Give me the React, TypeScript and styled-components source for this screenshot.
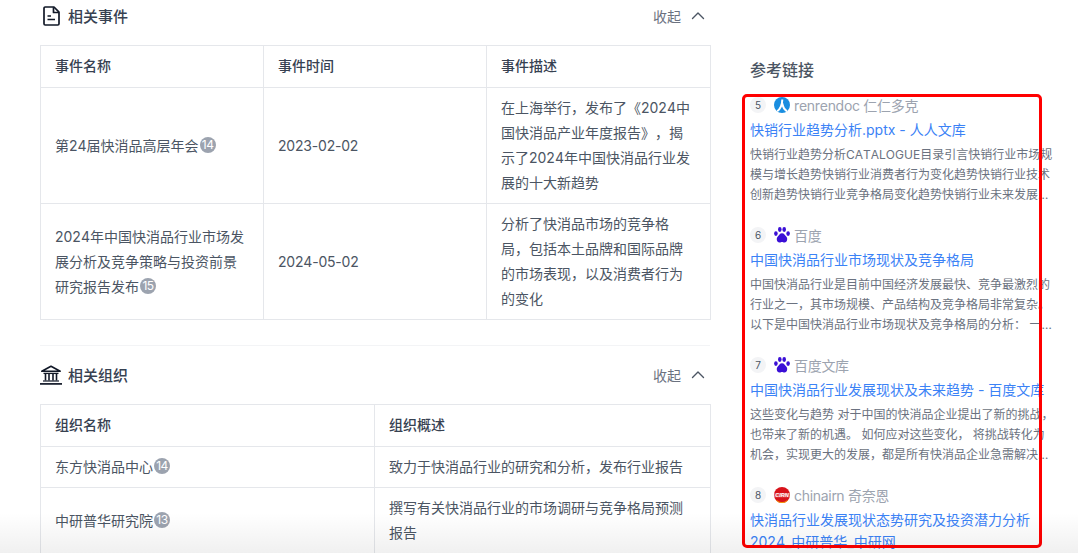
import styled, { createGlobalStyle } from 'styled-components';

const GlobalStyle = createGlobalStyle`
  html, body {
    margin: 0;
    padding: 0;
    height: 100%;
    background: #fff;
    overflow: hidden;
    font-family: Inter, "Noto Sans CJK SC", "Noto Sans", sans-serif;
    text-spacing-trim: space-all;
    font-kerning: none;
  }
  * { box-sizing: border-box; }
`;

const events = [
  { name: '第24届快消品高层年会', ref: 14, time: '2023-02-02', desc: '在上海举行，发布了《2024中国快消品产业年度报告》，揭示了2024年中国快消品行业发展的十大新趋势' },
  { name: '2024年中国快消品行业市场发展分析及竞争策略与投资前景研究报告发布', ref: 15, time: '2024-05-02', desc: '分析了快消品市场的竞争格局，包括本土品牌和国际品牌的市场表现，以及消费者行为的变化' },
];

const orgs = [
  { name: '东方快消品中心', ref: 14, desc: '致力于快消品行业的研究和分析，发布行业报告' },
  { name: '中研普华研究院', ref: 13, desc: '撰写有关快消品行业的市场调研与竞争格局预测报告' },
];

const links = [
  { n: 5, logo: 'renren', source: 'renrendoc 仁仁多克', title: '快销行业趋势分析.pptx - 人人文库', desc: '快销行业趋势分析CATALOGUE目录引言快销行业市场规模与增长趋势快销行业消费者行为变化趋势快销行业技术创新趋势快销行业竞争格局变化趋势快销行业未来发展趋势预测与建议总结与展望' },
  { n: 6, logo: 'baidu', source: '百度', title: '中国快消品行业市场现状及竞争格局', desc: '中国快消品行业是目前中国经济发展最快、竞争最激烈的行业之一，其市场规模、产品结构及竞争格局非常复杂。以下是中国快消品行业市场现状及竞争格局的分析： 一、市场规模持续扩大，产品结构不断优化' },
  { n: 7, logo: 'baidu', source: '百度文库', title: '中国快消品行业发展现状及未来趋势 - 百度文库', desc: '这些变化与趋势 对于中国的快消品企业提出了新的挑战， 也带来了新的机遇。 如何应对这些变化， 将挑战转化为机会，实现更大的发展，都是所有快消品企业急需解决的问题，也是本文要探讨的内容' },
  { n: 8, logo: 'cirn', source: 'chinairn 奇奈恩', title: '快消品行业发展现状态势研究及投资潜力分析2024_中研普华_中研网', desc: '' },
];

const DocIcon = () => (
  <svg width="17" height="20" viewBox="0 0 17 20" fill="none" stroke="#111827" strokeWidth="1.7" strokeLinejoin="round">
    <path d="M2.200 1h8.800l5 5.200v11.600a1.200 1.200 0 0 1-1.200 1.200H2.200A1.200 1.200 0 0 1 1 17.800V2.200A1.200 1.200 0 0 1 2.200 1z" />
    <path d="M10.500 1.200v5.300h5.300" />
    <path d="M4.500 10h3.500M4.500 13.500h7.500" strokeWidth="1.300" />
  </svg>
);

const BankIcon = () => (
  <svg width="22" height="20" viewBox="0 0 22 20" fill="none" stroke="#111827">
    <path d="M11 1.200 1.800 6.300h18.400z" strokeWidth="1.600" strokeLinejoin="round" />
    <path d="M3.500 8.400h15" strokeWidth="1.300" />
    <path d="M5.500 9v6.500M9 9v6.500M13 9v6.500M16.500 9v6.500" strokeWidth="1.600" />
    <path d="M3 16h16" strokeWidth="1.200" />
    <path d="M0 18.900h22" strokeWidth="1.700" />
  </svg>
);

const Chevron = () => (
  <svg width="14" height="14" viewBox="0 0 14 14" fill="none" stroke="#4b5563" strokeWidth="1.400" strokeLinecap="round" strokeLinejoin="round">
    <path d="M1.500 9.500 7 4l5.500 5.500" />
  </svg>
);

const RenrenLogo = () => (
  <svg width="16" height="16" viewBox="0 0 16 16">
    <circle cx="8" cy="8" r="8" fill="#1a8ee0" />
    <path d="M8.300 2.500C8.200 8 6.800 11.500 3.200 14.300M8.300 6.500c.5 3.500 2 6 4.700 7.800" fill="none" stroke="#fff" strokeWidth="2" />
  </svg>
);

const BaiduLogo = () => (
  <svg width="16" height="16" viewBox="0 0 16 16">
    <g fill="#3a0fd6">
      <ellipse cx="1.900" cy="6.600" rx="1.800" ry="2.300" />
      <ellipse cx="5.800" cy="2.500" rx="1.800" ry="2.400" />
      <ellipse cx="10.200" cy="2.500" rx="1.800" ry="2.400" />
      <ellipse cx="14.100" cy="6.600" rx="1.800" ry="2.300" />
      <path d="M8 6.200c2.300 0 2.900 2.100 4.200 3.300 1.700 1.500 1.300 5.800-1.700 6.100-1.100.1-1.600-.5-2.500-.5s-1.400.6-2.500.5c-3-.3-3.400-4.600-1.700-6.100C5.100 8.300 5.700 6.200 8 6.200z" />
    </g>
  </svg>
);

const CirnLogo = () => (
  <svg width="16" height="16" viewBox="0 0 16 16">
    <circle cx="8" cy="8" r="8" fill="#d8131b" />
    <path d="M2.500 13.500a8 8 0 0 0 11 0" fill="none" stroke="#f59e0b" strokeWidth="1" />
    <path d="M0 6.200h16v4.200H0z" fill="#fff" opacity="0.25" />
    <text x="8" y="10" textAnchor="middle" fontSize="5.500" fontWeight="700" fontStyle="italic" fill="#fff" fontFamily="Liberation Sans, sans-serif">CIRN</text>
  </svg>
);

const Logo = ({ kind }: { kind: string }) => {
  if (kind === 'renren') return <RenrenLogo />;
  if (kind === 'baidu') return <BaiduLogo />;
  return <CirnLogo />;
};

const App = () => {
  return (
    <Page>
      <GlobalStyle />
      <Main>
        <SectionHead>
          <HeadTitle>
            <DocIconBox>
              <DocIcon />
            </DocIconBox>
            相关事件
          </HeadTitle>
          <Collapse>
            收起
            <Chevron />
          </Collapse>
        </SectionHead>
        <Table>
          <colgroup>
            <col width="223" />
            <col width="223" />
            <col width="224" />
          </colgroup>
          <thead>
            <tr>
              <Th>事件名称</Th>
              <Th>事件时间</Th>
              <Th>事件描述</Th>
            </tr>
          </thead>
          <tbody>
            {events.map((e) => (
              <tr key={e.time}>
                <Td>
                  {e.name}
                  <RefBadge>{e.ref}</RefBadge>
                </Td>
                <DateTd>{e.time}</DateTd>
                <Td>{e.desc}</Td>
              </tr>
            ))}
          </tbody>
        </Table>
        <Divider />
        <SectionHead>
          <HeadTitle>
            <BankIcon />
            相关组织
          </HeadTitle>
          <Collapse>
            收起
            <Chevron />
          </Collapse>
        </SectionHead>
        <Table>
          <colgroup>
            <col width="334" />
            <col width="336" />
          </colgroup>
          <thead>
            <tr>
              <Th>组织名称</Th>
              <Th>组织概述</Th>
            </tr>
          </thead>
          <tbody>
            {orgs.map((o) => (
              <tr key={o.name}>
                <Td>
                  {o.name}
                  <RefBadge>{o.ref}</RefBadge>
                </Td>
                <Td>{o.desc}</Td>
              </tr>
            ))}
          </tbody>
        </Table>
      </Main>
      <Side>
        <SideTitle>参考链接</SideTitle>
        <LinkList>
          {links.map((l) => (
            <LinkItem key={l.n}>
              <SourceRow>
                <NumBadge>{l.n}</NumBadge>
                <Logo kind={l.logo} />
                <Source>{l.source}</Source>
              </SourceRow>
              <LinkTitle>{l.title}</LinkTitle>
              {l.desc && <LinkDesc>{l.desc}</LinkDesc>}
            </LinkItem>
          ))}
        </LinkList>
      </Side>
      <RedFrame />
      <BottomFade />
    </Page>
  );
};

export default App;

const Page = styled.div`
  position: relative;
  width: 1078px;
  height: 553px;
  overflow: hidden;
  display: flex;
  align-items: flex-start;
  gap: 40px;
  padding-left: 40px;
`;

const Main = styled.div`
  width: 670px;
  flex-shrink: 0;
`;

const SectionHead = styled.div`
  height: 31px;
  display: flex;
  align-items: center;
  justify-content: space-between;
  margin-bottom: 14px;
`;

const HeadTitle = styled.div`
  display: flex;
  align-items: center;
  gap: 6px;
  font-size: 15px;
  font-weight: 500;
  color: #374151;
`;

const DocIconBox = styled.span`
  display: flex;
  margin-left: 3px;
  margin-right: 2px;
`;

const Collapse = styled.div`
  display: flex;
  align-items: center;
  gap: 10px;
  font-size: 14px;
  color: #6b7280;
  padding-right: 5px;
`;

const Table = styled.table`
  width: 669px;
  table-layout: fixed;
  border-collapse: collapse;
  font-size: 14px;
  line-height: 25px;
`;

const Th = styled.th`
  border: 1px solid #e5e7eb;
  padding: 7px 14px 9px;
  text-align: left;
  font-weight: 500;
  color: #374151;
`;

const Td = styled.td`
  border: 1px solid #e5e7eb;
  padding: 7px 14px 8px;
  color: #4b5563;
  vertical-align: middle;
`;

const DateTd = styled(Td)`
  letter-spacing: -0.2px;
`;

const RefBadge = styled.span`
  display: inline-flex;
  align-items: center;
  justify-content: center;
  width: 16px;
  height: 16px;
  margin-left: 1px;
  border-radius: 50%;
  background: #9ca3af;
  color: #fff;
  font-size: 12px;
  line-height: 16px;
  letter-spacing: -0.5px;
  vertical-align: 2px;
`;

const Divider = styled.div`
  height: 1px;
  background: #f3f4f6;
  margin: 25px 0 13px;
`;

const Side = styled.aside`
  width: 305px;
  flex-shrink: 0;
  padding-top: 58px;
`;

const SideTitle = styled.div`
  font-size: 16px;
  line-height: 24px;
  font-weight: 500;
  color: #4b5563;
  margin-bottom: 13px;
`;

const LinkList = styled.div`
  display: flex;
  flex-direction: column;
  gap: 19px;
`;

const LinkItem = styled.div`
  height: 111px;
`;

const SourceRow = styled.div`
  display: flex;
  align-items: center;
  height: 20px;
  gap: 8px;
`;

const NumBadge = styled.span`
  display: flex;
  align-items: center;
  justify-content: center;
  width: 16px;
  height: 16px;
  border-radius: 50%;
  background: #f3f4f6;
  color: #4b5563;
  font-size: 10px;
`;

const Source = styled.span`
  margin-left: -4px;
  font-size: 14px;
  letter-spacing: -0.3px;
  color: #9ca3af;
`;

const LinkTitle = styled.div`
  margin-top: 4px;
  font-size: 14px;
  line-height: 22px;
  color: #3b82f6;
`;

const LinkDesc = styled.div`
  margin-top: 4px;
  font-size: 12px;
  line-height: 20px;
  color: #6b7280;
  display: -webkit-box;
  -webkit-box-orient: vertical;
  -webkit-line-clamp: 3;
  overflow: hidden;
`;

const RedFrame = styled.div`
  position: absolute;
  left: 742px;
  top: 94px;
  width: 300px;
  height: 454px;
  border: 3px solid #f00;
  border-radius: 5px;
  pointer-events: none;
`;

const BottomFade = styled.div`
  position: absolute;
  left: 0;
  right: 0;
  bottom: 0;
  height: 40px;
  background: linear-gradient(to bottom, rgba(0, 0, 0, 0), rgba(0, 0, 0, 0.06));
  pointer-events: none;
`;
